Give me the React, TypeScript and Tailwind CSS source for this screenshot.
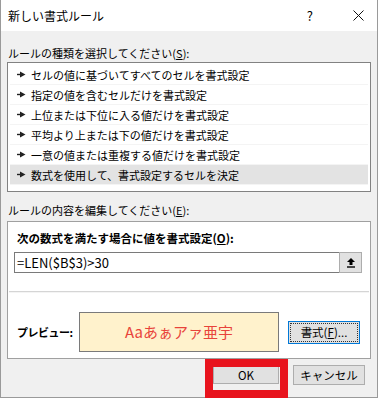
import React from 'react'

const rules = [
  'セルの値に基づいてすべてのセルを書式設定',
  '指定の値を含むセルだけを書式設定',
  '上位または下位に入る値だけを書式設定',
  '平均より上または下の値だけを書式設定',
  '一意の値または重複する値だけを書式設定',
  '数式を使用して、書式設定するセルを決定',
]

function Pointer() {
  return (
    <svg width="9" height="7" viewBox="0 0 9 7" className="shrink-0">
      <path d="M0 3.5H4" stroke="#222" strokeWidth="1.4" />
      <path d="M3 0.5L8.5 3.5L3 6.5Z" fill="#222" />
    </svg>
  )
}

export default function App() {
  const jp = "font-['Noto_Sans_CJK_JP','Noto_Sans',sans-serif]"
  return (
    <div className={`relative w-[380px] h-[398px] bg-white overflow-hidden text-black ${jp}`}>
      <div className="w-[378px] h-[398px] border-x border-[#9a9a9a] flex flex-col">
        {/* title bar */}
        <div className="h-[31px] bg-white flex items-center pl-[7px] shrink-0">
          <span className="text-[12px] leading-[16px]">新しい書式ルール</span>
          <span className="ml-auto mr-[40px] text-[13px] leading-[16px]">?</span>
          <svg width="11" height="11" viewBox="0 0 11 11" className="mr-[13px]">
            <path d="M0.5 0.5L10.5 10.5M10.5 0.5L0.5 10.5" stroke="#111" strokeWidth="1" />
          </svg>
        </div>

        {/* body */}
        <div className="flex-1 bg-[#f0f0f0] px-[6px] flex flex-col">
          <div className="mt-[14px] h-[16px] text-[11px] leading-[16px] pl-[1px]">
            ルールの種類を選択してください(<span className="underline">S</span>):
          </div>
          <div className="mt-[1px] h-[130px] border border-[#828282] bg-white px-[2px] pt-[2px]">
            {rules.map((r, i) => (
              <div
                key={r}
                className={`h-[20px] flex items-center gap-[5px] pl-[7px] text-[11px] leading-[20px] border-b border-[#f4f4f4] ${
                  i === rules.length - 1 ? 'bg-[#e3e3e3]' : ''
                }`}
              >
                <Pointer />
                <span>{r}</span>
              </div>
            ))}
          </div>

          <div className="mt-[10px] h-[16px] text-[11px] leading-[16px] pl-[1px]">
            ルールの内容を編集してください(<span className="underline">E</span>):
          </div>
          <div className="mt-[3px] h-[138px] border border-[#a0a0a0] bg-white flex flex-col">
            <div className="mt-[8px] h-[16px] pl-[9px] text-[11.5px] font-bold leading-[16px]">
              次の数式を満たす場合に値を書式設定(<span className="underline">O</span>):
            </div>
            <div className="mt-[6px] ml-[6px] mr-[8px] h-[21px] border border-[#7a7a7a] flex items-center">
              <span className="pl-[2px] text-[13px] leading-[16px]">=LEN($B$3)&gt;30</span>
              <div className="ml-auto mr-[-1px] h-[21px] w-[23px] bg-[#e1e1e1] border border-[#adadad] flex items-center justify-center">
                <svg width="10" height="11" viewBox="0 0 10 11">
                  <path d="M5 1L1 5H3.5V8H6.5V5H9Z" fill="#000" />
                  <path d="M1 10H9" stroke="#000" strokeWidth="1.4" />
                </svg>
              </div>
            </div>
            <div className="mt-[18px] mx-[1px] h-[2px] border-t border-[#d5d5d5] border-b border-b-[#f4f4f4]" />
            <div className="mt-[19px] flex items-center">
              <span className="pl-[9px] w-[71px] shrink-0 whitespace-nowrap text-[11px] font-bold leading-[16px] tracking-[-0.5px]">
                プレビュー:
              </span>
              <div className="h-[40px] w-[200px] shrink-0 border border-[#7a7a7a] bg-[#fff2cc] flex items-center justify-center">
                <span className="text-[15px] leading-[20px] text-[#e8433a]">Aaあぁアァ亜宇</span>
              </div>
              <div className="ml-[9px] h-[23px] w-[72px] shrink-0 border border-[#0078d7] bg-[#e1e1e1] p-[1px]">
                <div className="h-full w-full border border-dotted border-[#333] flex items-center justify-center text-[11.5px] leading-[16px] whitespace-nowrap">
                  書式(<span className="underline">F</span>)...
                </div>
              </div>
            </div>
          </div>

          <div className="mt-[6px] flex justify-end items-start gap-[14px] pr-[6px]">
            <div className="h-[19px] w-[66px] bg-[#e1e1e1] border border-[#adadad] flex items-center justify-center text-[11.5px] leading-[16px]">
              OK
            </div>
            <div className="h-[20px] w-[72px] bg-[#e1e1e1] border border-[#adadad] flex items-center justify-center text-[11.5px] leading-[16px]">
              キャンセル
            </div>
          </div>
        </div>
        <div className="h-[1px] bg-[#9a9a9a]" />
      </div>

      {/* red annotation around OK */}
      <div className="absolute left-[205px] top-[359px] w-[83px] h-[39px] border-[8px] border-[#e8131d]" />
    </div>
  )
}
